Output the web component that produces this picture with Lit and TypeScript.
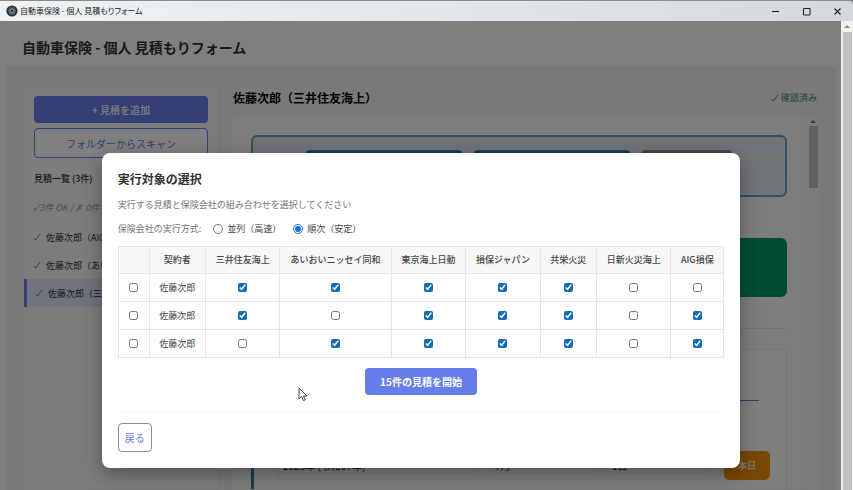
import { LitElement, html, css, svg } from "lit";
import { customElement, state } from "lit/decorators.js";

const INSURERS = [
  "三井住友海上",
  "あいおいニッセイ同和",
  "東京海上日動",
  "損保ジャパン",
  "共栄火災",
  "日新火災海上",
  "AIG損保",
];

const ROWS = [
  { name: "佐藤次郎", picks: [1, 1, 1, 1, 1, 0, 0] },
  { name: "佐藤次郎", picks: [1, 0, 1, 1, 1, 0, 1] },
  { name: "佐藤次郎", picks: [0, 1, 1, 1, 1, 0, 1] },
];

const baseFont = css`
  * {
    box-sizing: border-box;
  }
  button,
  input,
  select {
    font-family: inherit;
    margin: 0;
  }
  h1,
  h2,
  h3,
  p,
  ul {
    margin: 0;
    padding: 0;
  }
`;

@customElement("window-bar")
class WindowBar extends LitElement {
  static styles = [
    baseFont,
    css`
      :host {
        display: flex;
        align-items: center;
        height: 21px;
        padding: 0 0 0 6px;
        background: linear-gradient(90deg, #f0f3f4, #e2e6ea 55%, #d5d8dd);
        border-top: 1px solid #8a8d90;
        border-radius: 0 4px 0 0;
      }
      .logo {
        width: 12px;
        height: 12px;
        margin-right: 2px;
      }
      .name {
        flex: 1;
        font-size: 8px;
        line-height: 12px;
        color: #222;
        font-feature-settings: "palt";
      }
      button {
        width: 31px;
        height: 20px;
        padding: 0;
        border: 0;
        background: none;
        display: grid;
        place-items: center;
      }
      button svg {
        width: 9px;
        height: 9px;
        fill: none;
        stroke: #222;
        stroke-width: 1.1;
      }
    `,
  ];
  render() {
    return html`
      <svg class="logo" viewBox="0 0 12 12">
        <circle cx="6" cy="6" r="5.6" fill="#26323a" />
        <g fill="none" stroke="#84979d" stroke-width=".6">
          <ellipse cx="6" cy="6" rx="3.8" ry="1.5" />
          <ellipse cx="6" cy="6" rx="3.8" ry="1.5" transform="rotate(60 6 6)" />
          <ellipse cx="6" cy="6" rx="3.8" ry="1.5" transform="rotate(120 6 6)" />
        </g>
      </svg>
      <span class="name">自動車保険 - 個人 見積もりフォーム</span>
      <button aria-label="最小化"><svg viewBox="0 0 9 9"><path d="M1 4.5h7" /></svg></button>
      <button aria-label="最大化">
        <svg viewBox="0 0 9 9"><rect x="1.500" y="1.500" width="6.500" height="6.500" rx=".6" /></svg>
      </button>
      <button aria-label="閉じる"><svg viewBox="0 0 9 9"><path d="M1.500 1.500l6 6M7.500 1.500l-6 6" /></svg></button>
    `;
  }
}

@customElement("quote-page")
class QuotePage extends LitElement {
  static styles = [
    baseFont,
    css`
      :host {
        display: flex;
        flex-direction: column;
        height: 100%;
        background: #fff;
        color: #333;
      }
      .top {
        flex: none;
        height: 45px;
        padding: 16px 22px 0;
      }
      h1 {
        font-size: 14px;
        line-height: 20px;
        font-weight: 600;
      }
      .body {
        flex: 1;
        min-height: 0;
        margin: 0 5px 0 7px;
        padding: 19px 17px 0 16px;
        background: #f3f3f3;
        display: flex;
        gap: 12px;
      }
      .side {
        flex: 0 0 196px;
        background: #f9f9f9;
        border: 1px solid #ededed;
        border-radius: 4px 4px 0 0;
        padding-top: 10px;
      }
      .actions {
        display: flex;
        flex-direction: column;
        gap: 5px;
        padding: 0 10px;
      }
      .add {
        height: 27px;
        border: 0;
        border-radius: 4px;
        background: #667eea;
        color: #fff;
        font-size: 10px;
        font-weight: 500;
      }
      .scan {
        height: 30px;
        border: 1px solid #667eea;
        border-radius: 4px;
        background: #fff;
        color: #667eea;
        font-size: 10px;
      }
      h3 {
        padding: 14px 10px 0;
        font-size: 9px;
        line-height: 14px;
        font-weight: 500;
      }
      .sum {
        padding: 15px 9px 8px;
        font-size: 9px;
        line-height: 14px;
        color: #999;
        font-style: italic;
      }
      .list {
        list-style: none;
      }
      .item {
        display: flex;
        align-items: center;
        gap: 5px;
        height: 28px;
        padding-left: 9px;
        font-size: 9px;
      }
      .item.on {
        border-left: 3px solid #667eea;
        background: #e0e7fa;
        padding-left: 8px;
      }
      .tick {
        width: 8px;
        height: 8px;
        fill: none;
        stroke: #5c8a6b;
        stroke-width: 1;
      }
      .main {
        flex: 1;
        min-width: 0;
        display: flex;
        flex-direction: column;
      }
      .head {
        flex: none;
        display: flex;
        justify-content: space-between;
        align-items: center;
        height: 25px;
        padding: 0 2px;
        margin-bottom: 5px;
      }
      h2 {
        font-size: 12px;
        line-height: 18px;
        font-weight: 600;
        color: #000;
      }
      .ok {
        display: flex;
        align-items: center;
        gap: 2px;
        font-size: 9px;
        color: #4c8a5c;
      }
      .frame {
        flex: 1;
        min-height: 0;
        display: flex;
      }
      .sheet {
        flex: 1;
        min-width: 0;
        overflow: hidden;
        padding: 19px 20px 0 19px;
        background: #fbfbfb;
        border: 1px solid #eee;
        border-radius: 4px 0 0 0;
        border-right: 0;
      }
      .bar {
        flex: 0 0 12px;
        display: flex;
        flex-direction: column;
        align-items: center;
        gap: 2px;
        padding-top: 4px;
        background: #f6f6f6;
      }
      .bar svg {
        width: 6px;
        height: 5px;
        fill: #777;
      }
      .thumb {
        width: 9px;
        height: 62px;
        background: #c1c1c1;
      }
      .choices {
        height: 62px;
        border: 2px solid #6c9fc6;
        border-radius: 6px;
        background: linear-gradient(180deg, #dceaf4, #e4e8f2);
        display: flex;
        justify-content: center;
        gap: 10px;
        padding-top: 13px;
      }
      .choice {
        width: 158px;
        height: 32px;
        border: 0;
        border-radius: 5px;
        background: #3478b4;
      }
      .choice.off {
        width: 92px;
        background: #8c8c8c;
      }
      .green {
        display: block;
        width: 100%;
        height: 59px;
        margin-top: 41px;
        border: 0;
        border-radius: 6px;
        background: #009966;
      }
      .rule {
        margin-top: 31px;
        height: 1px;
        background: #e4e4e4;
      }
      .card {
        margin-top: 20px;
        height: 200px;
        padding: 50px 27px 0 24px;
        border: 1px solid #eee;
        border-left: 3px solid #22869a;
        border-radius: 5px;
        background: #fcfcfc;
      }
      .line {
        height: 1px;
        background: #667eea;
      }
      .fields {
        display: flex;
        align-items: center;
        gap: 12px;
        margin-top: 50px;
        margin-right: -11px;
      }
      select {
        flex: 1;
        height: 29px;
        padding: 0 4px;
        border: 1px solid #f0f0f0;
        border-radius: 4px;
        appearance: none;
        background: none;
        font-size: 10px;
        color: #222;
      }
      .year {
        flex: 2;
      }
      .today {
        flex: none;
        width: 46px;
        height: 29px;
        border: 0;
        border-radius: 5px;
        background: #f0900f;
        color: #fff;
        font-size: 9px;
        font-weight: 500;
        padding: 0;
      }
    `,
  ];
  tick() {
    return html`<svg class="tick" viewBox="0 0 8 8">${svg`<path d="M1 5l1.600 2L7 1" />`}</svg>`;
  }
  render() {
    return html`
      <header class="top"><h1>自動車保険 - 個人 見積もりフォーム</h1></header>
      <div class="body">
        <aside class="side">
          <div class="actions">
            <button class="add">+ 見積を追加</button>
            <button class="scan">フォルダーからスキャン</button>
          </div>
          <h3>見積一覧 (3件)</h3>
          <p class="sum">✓3件 OK / ✗ 0件 :</p>
          <ul class="list">
            <li class="item">${this.tick()}佐藤次郎（AIG損保）</li>
            <li class="item">${this.tick()}佐藤次郎（あいおい）</li>
            <li class="item on">${this.tick()}佐藤次郎（三井住友）</li>
          </ul>
        </aside>
        <main class="main">
          <div class="head">
            <h2>佐藤次郎（三井住友海上）</h2>
            <span class="ok">${this.tick()}確認済み</span>
          </div>
          <div class="frame">
            <div class="sheet">
              <div class="choices">
                <button class="choice" aria-label="選択肢1"></button>
                <button class="choice" aria-label="選択肢2"></button>
                <button class="choice off" aria-label="選択肢3"></button>
              </div>
              <button class="green" aria-label="実行"></button>
              <div class="rule"></div>
              <section class="card">
                <div class="line"></div>
                <div class="fields">
                  <select class="year" aria-label="年"><option>2025年 (令和07年)</option></select>
                  <select aria-label="月"><option>7月</option></select>
                  <select aria-label="日"><option>1日</option></select>
                  <button class="today">本日</button>
                </div>
              </section>
            </div>
            <div class="bar">
              <svg viewBox="0 0 6 5"><path d="M0 4l3-3 3 3z" /></svg>
              <div class="thumb"></div>
            </div>
          </div>
        </main>
      </div>
    `;
  }
}

@customElement("run-dialog")
class RunDialog extends LitElement {
  @state() rows = ROWS;

  static styles = [
    baseFont,
    css`
      :host {
        display: block;
        width: 76%;
        padding: 16px;
        border-radius: 8px;
        background: #fff;
        box-shadow: 0 6px 20px rgba(0, 0, 0, 0.35);
        color: #444;
        font-size: 9px;
        line-height: 14px;
      }
      h2 {
        font-size: 12px;
        line-height: 20px;
        font-weight: 600;
        color: #333;
      }
      .desc {
        margin-top: 9px;
        color: #777;
      }
      .mode {
        display: flex;
        align-items: center;
        margin: 10px 0;
        padding: 0;
        border: 0;
      }
      .cap {
        color: #777;
        margin-right: 12px;
      }
      .mode label {
        display: flex;
        align-items: center;
        gap: 4px;
        margin-right: 12px;
      }
      input {
        display: block;
        width: 9px;
        height: 9px;
        accent-color: #0f6cb6;
      }
      input[type="radio"] {
        width: 10px;
        height: 10px;
        accent-color: #1a6fe0;
      }
      table {
        width: 100%;
        border-collapse: collapse;
      }
      th,
      td {
        height: 28px;
        padding: 0 9px;
        border: 1px solid #e6e6e6;
        text-align: center;
        font-weight: 400;
        white-space: nowrap;
      }
      thead th {
        height: 27px;
        background: #f8f8f8;
        font-weight: 500;
      }
      td input {
        margin: 0 auto;
      }
      .sel {
        width: 31px;
      }
      .go {
        display: block;
        height: 27px;
        margin: 10px auto 16px;
        padding: 0 15px;
        border: 0;
        border-radius: 4px;
        background: #667eea;
        color: #fff;
        font-size: 10px;
        font-weight: 700;
      }
      .foot {
        border-top: 1px solid #f9f9f9;
        padding-top: 11px;
      }
      .back {
        display: block;
        width: 34px;
        height: 29px;
        padding: 0;
        border: 1px solid #8a8da8;
        border-radius: 4px;
        background: #fff;
        color: #667eea;
        font-size: 10px;
      }
    `,
  ];
  render() {
    return html`
      <h2>実行対象の選択</h2>
      <p class="desc">実行する見積と保険会社の組み合わせを選択してください</p>
      <fieldset class="mode" aria-labelledby="cap">
        <span class="cap" id="cap">保険会社の実行方式:</span>
        <label><input type="radio" name="mode" />並列（高速）</label>
        <label><input type="radio" name="mode" checked />順次（安定）</label>
      </fieldset>
      <table>
        <thead>
          <tr>
            <th class="sel"></th>
            <th>契約者</th>
            ${INSURERS.map((n) => html`<th>${n}</th>`)}
          </tr>
        </thead>
        <tbody>
          ${this.rows.map(
            (r, i) => html`<tr>
              <td class="sel"><input type="checkbox" aria-label="行${i + 1}を選択" /></td>
              <td>${r.name}</td>
              ${r.picks.map(
                (p, j) => html`<td>
                  <input type="checkbox" aria-label=${r.name + " " + INSURERS[j]} ?checked=${p === 1} />
                </td>`
              )}
            </tr>`
          )}
        </tbody>
      </table>
      <button class="go">15件の見積を開始</button>
      <div class="foot"><button class="back">戻る</button></div>
    `;
  }
}

@customElement("app-root")
class AppRoot extends LitElement {
  static styles = [
    baseFont,
    css`
      :host {
        display: flex;
        flex-direction: column;
        height: 100vh;
        position: relative;
        overflow: hidden;
        background: #77797b;
        font-family: "Noto Sans CJK JP", "Liberation Sans", sans-serif;
      }
      .view {
        flex: 1;
        min-height: 0;
        display: flex;
      }
      .stage {
        flex: 1;
        min-width: 0;
        position: relative;
        overflow: hidden;
      }
      .shade {
        position: absolute;
        inset: 0;
        display: flex;
        justify-content: center;
        align-items: flex-start;
        padding: 132px 0 0 1px;
        background: rgba(0, 0, 0, 0.5);
      }
      .scroll {
        flex: 0 0 12px;
        display: flex;
        flex-direction: column;
        align-items: center;
        padding-top: 3px;
        gap: 3px;
        background: #f1f1f1;
      }
      .scroll svg {
        width: 6px;
        height: 5px;
        fill: #888;
      }
      .thumb {
        flex: 1;
        width: 9px;
        background: #c1c1c1;
      }
      .cursor {
        position: absolute;
        left: 298px;
        top: 387px;
        width: 10px;
        height: 15px;
      }
    `,
  ];
  render() {
    return html`
      <window-bar></window-bar>
      <div class="view">
        <div class="stage">
          <quote-page></quote-page>
          <div class="shade"><run-dialog role="dialog" aria-modal="true"></run-dialog></div>
        </div>
        <div class="scroll">
          <svg viewBox="0 0 6 5"><path d="M0 4l3-3 3 3z" /></svg>
          <div class="thumb"></div>
        </div>
      </div>
      <svg class="cursor" viewBox="0 0 10 15">
        <path d="M1 1v11l2.600-2.400 1.800 4 1.800-.8-1.700-3.800H9z" fill="#fff" stroke="#333" stroke-width=".9" />
      </svg>
    `;
  }
}
